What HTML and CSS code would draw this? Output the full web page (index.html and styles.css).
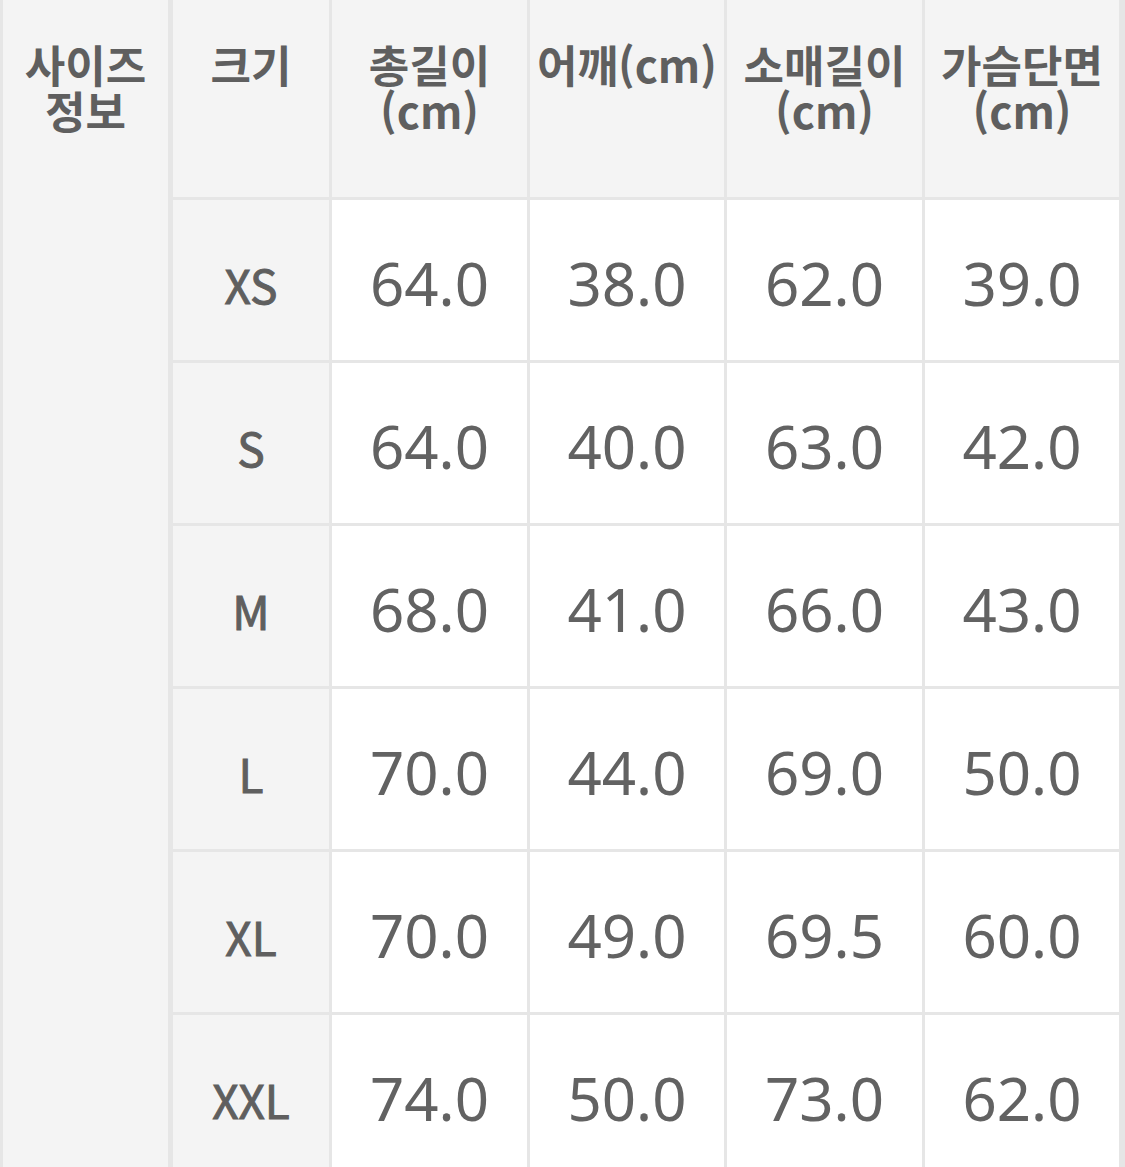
FILE: index.html
```html
<!DOCTYPE html>
<html lang="ko">
<head>
<meta charset="utf-8">
<link rel="stylesheet" href="styles.css">
</head>
<body>
<div class="sheet">
  <div class="side"><div class="side-title">사이즈<br>정보</div></div>
  <div class="grid">
    <div class="cell head">크기</div>
    <div class="cell head">총길이<br>(cm)</div>
    <div class="cell head">어깨(cm)</div>
    <div class="cell head">소매길이<br>(cm)</div>
    <div class="cell head">가슴단면<br>(cm)</div>

    <div class="cell size">XS</div>
    <div class="cell num">64.0</div><div class="cell num">38.0</div><div class="cell num">62.0</div><div class="cell num">39.0</div>

    <div class="cell size">S</div>
    <div class="cell num">64.0</div><div class="cell num">40.0</div><div class="cell num">63.0</div><div class="cell num">42.0</div>

    <div class="cell size">M</div>
    <div class="cell num">68.0</div><div class="cell num">41.0</div><div class="cell num">66.0</div><div class="cell num">43.0</div>

    <div class="cell size">L</div>
    <div class="cell num">70.0</div><div class="cell num">44.0</div><div class="cell num">69.0</div><div class="cell num">50.0</div>

    <div class="cell size">XL</div>
    <div class="cell num">70.0</div><div class="cell num">49.0</div><div class="cell num">69.5</div><div class="cell num">60.0</div>

    <div class="cell size">XXL</div>
    <div class="cell num">74.0</div><div class="cell num">50.0</div><div class="cell num">73.0</div><div class="cell num">62.0</div>
  </div>
</div>
</body>
</html>
```
FILE: styles.css
```css
html, body {
  margin: 0;
  padding: 0;
  background: #ffffff;
  overflow: hidden;
}
.sheet {
  display: flex;
  gap: 5px;
  width: 1125px;
  box-sizing: border-box;
  padding-left: 3px;
  padding-right: 5px;
  background: #e6e6e6;
  font-family: "Noto Sans CJK KR", "Noto Sans", sans-serif;
  color: #5f5f5f;
}
.side {
  width: 165px;
  background: #f4f4f4;
  flex: none;
}
.side-title {
  padding-top: 41px;
  text-align: center;
  font-size: 44px;
  line-height: 46px;
  font-weight: 700;
}
.grid {
  flex: 1;
  display: grid;
  grid-template-columns: 156px 195px 194px 195px 194px;
  grid-template-rows: 197px repeat(6, 160px);
  gap: 3px;
}
.cell {
  background: #ffffff;
  text-align: center;
}
.head {
  background: #f4f4f4;
  padding-top: 41px;
  font-size: 44px;
  line-height: 46px;
  font-weight: 700;
  white-space: nowrap;
}
.size {
  background: #f4f4f4;
  display: flex;
  align-items: center;
  justify-content: center;
  font-family: "Noto Sans CJK KR", "Noto Sans", sans-serif;
  font-weight: 400;
  font-size: 46px;
  -webkit-text-stroke: 1px #5f5f5f;
  padding-top: 8px;
  box-sizing: border-box;
}
.num {
  display: flex;
  align-items: center;
  justify-content: center;
  font-family: "Noto Sans", sans-serif;
  font-weight: 400;
  font-size: 60px;
  color: #626262;
  padding-top: 6px;
  box-sizing: border-box;
}
```
